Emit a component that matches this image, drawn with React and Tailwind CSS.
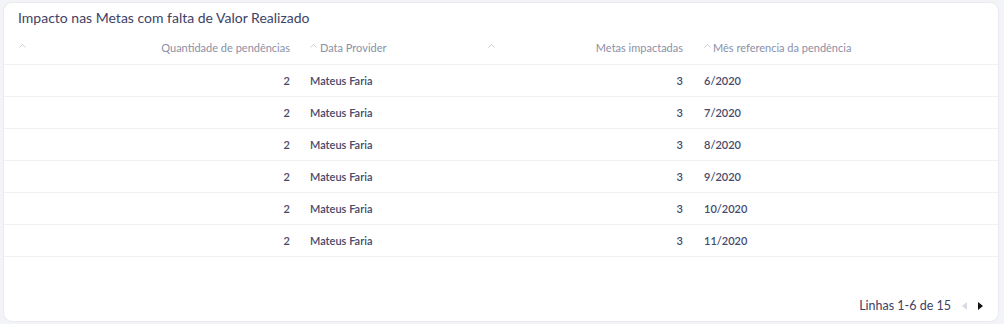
import React from "react";

const rows = [
  ["2", "Mateus Faria", "3", "6/2020"],
  ["2", "Mateus Faria", "3", "7/2020"],
  ["2", "Mateus Faria", "3", "8/2020"],
  ["2", "Mateus Faria", "3", "9/2020"],
  ["2", "Mateus Faria", "3", "10/2020"],
  ["2", "Mateus Faria", "3", "11/2020"],
];

const Caret = () => (
  <svg width="7" height="4" viewBox="0 0 7 4" className="shrink-0">
    <path d="M0.5 3.5 L3.5 0.5 L6.5 3.5" fill="none" stroke="#c9cdd8" strokeWidth="1" />
  </svg>
);

const cols = "grid grid-cols-[296px_182px_211px_1fr]";

export default function App() {
  return (
    <div
      className="w-[1004px] h-[324px] bg-[#f3f4f7] pt-[3px] pl-[4px] pr-[6px] pb-[3px]"
      style={{ fontFamily: "Lato, 'Noto Sans', sans-serif" }}
    >
      <div className="w-full h-full bg-white rounded-[8px] shadow-[0_0_2px_rgba(0,0,0,0.12)] flex flex-col">
        <div className="h-[30px] pl-[14px] flex items-center text-[14px] text-[#3e4264] pb-[1px]">
          Impacto nas Metas com falta de Valor Realizado
        </div>
        <div className={`${cols} h-[32px] border-b border-[#f1f2f5] text-[11px] text-[#8b90a6]`}>
          <div className="flex items-center justify-between pl-[15px] pr-[10px]">
            <span className="-mt-[6px]"><Caret /></span>
            <span>Quantidade de pendências</span>
          </div>
          <div className="flex items-center pl-[10px] gap-[3px]">
            <span className="-mt-[6px]"><Caret /></span>
            <span>Data Provider</span>
          </div>
          <div className="flex items-center justify-between pl-[6px] pr-[10px]">
            <span className="-mt-[6px]"><Caret /></span>
            <span>Metas impactadas</span>
          </div>
          <div className="flex items-center pl-[11px] gap-[2px]">
            <span className="-mt-[6px]"><Caret /></span>
            <span>Mês referencia da pendência</span>
          </div>
        </div>
        {rows.map((r, i) => (
          <div
            key={i}
            className={`${cols} h-[32px] pt-[2px] border-b border-[#f1f2f5] text-[11px] font-semibold text-[#464a6c]`}
          >
            <div className="flex items-center justify-end pr-[10px]">{r[0]}</div>
            <div className="flex items-center pl-[10px]">{r[1]}</div>
            <div className="flex items-center justify-end pr-[10px]">{r[2]}</div>
            <div className="flex items-center pl-[11px]">{r[3]}</div>
          </div>
        ))}
        <div className="flex-1" />
        <div className="h-[30px] flex items-center justify-end pr-[15px]">
          <span className="text-[12.5px] text-[#3e4264]">Linhas 1-6 de 15</span>
          <svg width="5" height="8" viewBox="0 0 5 8" className="ml-[11px]">
            <path d="M5 0 L0 4 L5 8 Z" fill="#d8dbe3" />
          </svg>
          <svg width="5" height="8" viewBox="0 0 5 8" className="ml-[11px]">
            <path d="M0 0 L5 4 L0 8 Z" fill="#111" />
          </svg>
        </div>
      </div>
    </div>
  );
}
